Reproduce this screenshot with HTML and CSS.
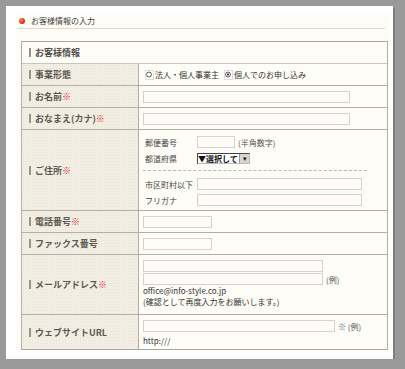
FILE: index.html
```html
<!DOCTYPE html>
<html lang="ja">

<head>
    <meta charset="UTF-8">
    <meta name="viewport" content="width=device-width, initial-scale=1.0">
    <title>お客様情報の入力</title>
    <link rel="stylesheet" href="styles.css">
</head>

<body>

    <!-- Outer panel -->
    <div class="panel">
        <div class="sheet">

            <!-- Page title -->
            <h1 class="title"><span class="dot"></span>お客様情報の入力</h1>

            <!-- Customer form -->
            <div class="form">
                <div class="caption"><span class="bar"></span>お客様情報</div>

                <div class="label"><span class="bar"></span>事業形態</div>
                <div class="value">
                    <span class="radio">
                        <svg width="9" height="10" viewBox="0 0 9 10"><circle cx="4.5" cy="4.5" r="2.8" fill="none" stroke="#333" stroke-width="0.9"/></svg>
                    </span>
                    <span class="opt">法人・個人事業主</span>
                    <span class="radio">
                        <svg width="9" height="10" viewBox="0 0 9 10"><circle cx="4.5" cy="4.5" r="2.8" fill="none" stroke="#333" stroke-width="0.9"/><circle cx="4.5" cy="4.5" r="1.2" fill="#222"/></svg>
                    </span>
                    <span class="opt">個人でのお申し込み</span>
                </div>

                <div class="label"><span class="bar"></span>お名前<span class="req">※</span></div>
                <div class="value"><input type="text" class="field w-name"></div>

                <div class="label"><span class="bar"></span>おなまえ(カナ)<span class="req">※</span></div>
                <div class="value"><input type="text" class="field w-name"></div>

                <div class="label tall"><span class="bar"></span>ご住所<span class="req">※</span></div>
                <div class="value address">
                    <div class="sub">
                        <span class="sub-label">郵便番号</span>
                        <input type="text" class="field w-zip">
                        <span class="note">(半角数字)</span>
                    </div>
                    <div class="sub">
                        <span class="sub-label">都道府県</span>
                        <span class="select">▼選択して<span class="select-btn">▾</span></span>
                    </div>
                    <div class="dashed"></div>
                    <div class="sub">
                        <span class="sub-label">市区町村以下</span>
                        <input type="text" class="field w-addr">
                    </div>
                    <div class="sub">
                        <span class="sub-label">フリガナ</span>
                        <input type="text" class="field w-addr">
                    </div>
                </div>

                <div class="label"><span class="bar"></span>電話番号<span class="req">※</span></div>
                <div class="value"><input type="text" class="field w-tel"></div>

                <div class="label"><span class="bar"></span>ファックス番号</div>
                <div class="value"><input type="text" class="field w-tel"></div>

                <div class="label"><span class="bar"></span>メールアドレス<span class="req">※</span></div>
                <div class="value stack mail">
                    <input type="text" class="field w-mail">
                    <div class="line"><input type="text" class="field w-mail"><span class="note">(例)</span></div>
                    <div class="text">office@info-style.co.jp</div>
                    <div class="text">(確認として再度入力をお願いします。)</div>
                </div>

                <div class="label last"><span class="bar"></span>ウェブサイトURL</div>
                <div class="value stack url last">
                    <div class="line"><input type="text" class="field w-url"><span class="note">※ (例)</span></div>
                    <div class="text">http:///</div>
                </div>
            </div>

        </div>
    </div>

</body>

</html>
```

FILE: styles.css
```css
/* Page background */
body {
    margin: 0;
    padding: 6px 0 0 6px;
    background-color: #999999;
    font-family: "Noto Sans CJK JP", "Noto Sans", sans-serif;
    color: #444444;
}

/* White outer panel */
.panel {
    width: 387px;
    height: 353px;
    background-color: #ffffff;
    box-shadow: 2px 2px 0 #7f7f7f;
    padding: 7px 4px 9px 10px;
    box-sizing: border-box;
}

/* Cream sheet */
.sheet {
    background-color: #fdfcf7;
    height: 337px;
}

/* Title */
.title {
    display: flex;
    align-items: center;
    height: 15px;
    margin: 0 4px 0 1px;
    padding-left: 2px;
    border-bottom: 1px solid #ead6cc;
    font-size: 8px;
    font-weight: normal;
    color: #444444;
}

.dot {
    width: 6px;
    height: 6px;
    border-radius: 50%;
    background: radial-gradient(circle at 35% 35%, #ff8a6a, #d8321a 60%, #b02010);
    margin-right: 6px;
}

/* Form grid */
.form {
    display: grid;
    grid-template-columns: 117px 1fr;
    grid-template-rows: 22px 22px 22px 22px 81px 22px 22px 60px 35px;
    width: 367px;
    margin: 12px 0 0 5px;
    border: 1px solid #b4afa3;
    border-top-color: #a9a69e;
    border-bottom: none;
    box-sizing: border-box;
}

.caption {
    grid-column: 1 / -1;
    display: flex;
    align-items: center;
    padding-left: 7px;
    border-bottom: 1px solid #c9c6bc;
    font-size: 9px;
    font-weight: bold;
    color: #55514b;
}

.bar {
    display: inline-block;
    width: 2px;
    height: 9px;
    background-color: #97938c;
    margin-right: 4px;
}

/* Label cells */
.label {
    display: flex;
    align-items: center;
    padding-left: 7px;
    background-color: #f2eee3;
    background-image: radial-gradient(#e9e4d6 0.6px, transparent 0.7px);
    background-size: 3px 3px;
    border-right: 1px solid #b4afa3;
    border-bottom: 1px solid #b4afa3;
    font-size: 9px;
    font-weight: bold;
    color: #5c5852;
}

.req {
    color: #e0282a;
}

/* Value cells */
.value {
    display: flex;
    align-items: center;
    padding-left: 4px;
    border-bottom: 1px solid #b4afa3;
    font-size: 8px;
    color: #333333;
}

.label.last,
.value.last {
    border-bottom-color: #a9a69e;
}

/* Radio buttons */
.radio {
    display: inline-flex;
    width: 9px;
    height: 10px;
    margin-left: 2px;
    background-color: #ffffff;
    border: 1px solid #dcdcdc;
    box-sizing: border-box;
}

.radio svg {
    margin: -1px 0 0 -1px;
}

.opt {
    margin: 0 3px 0 1px;
}

/* Text fields */
.field {
    display: block;
    height: 12px;
    padding: 0;
    margin: 0;
    border: 1px solid #d3d2cc;
    background-color: #fdfcf8;
    box-sizing: border-box;
}

.w-name { width: 207px; }
.w-zip { width: 38px; }
.w-addr { width: 165px; }
.w-tel { width: 69px; }
.w-mail { width: 180px; }
.w-url { width: 192px; }

.note {
    margin-left: 3px;
    color: #555555;
}

/* Address block */
.address {
    flex-direction: column;
    align-items: flex-start;
    justify-content: flex-start;
    padding-top: 6px;
    box-sizing: border-box;
}

.sub {
    display: flex;
    align-items: center;
    height: 12px;
    margin-bottom: 4px;
}

.sub-label {
    width: 52px;
    padding-left: 2px;
    color: #444444;
}

.select {
    display: flex;
    align-items: center;
    width: 53px;
    height: 11px;
    border: 1px solid #444444;
    border-right-color: #bbbbbb;
    border-bottom-color: #bbbbbb;
    background-color: #ffffff;
    box-sizing: border-box;
    font-size: 8px;
    font-weight: bold;
    color: #111111;
    position: relative;
}

.select-btn {
    position: absolute;
    right: 0;
    top: 0;
    width: 9px;
    height: 9px;
    background-color: #d8d5cf;
    border-left: 1px solid #999999;
    font-size: 7px;
    line-height: 9px;
    text-align: center;
    font-weight: normal;
}

.dashed {
    width: 224px;
    border-top: 1px dashed #bdb9b0;
    margin: 2px 0 7px 0;
}

/* Stacked cells */
.stack {
    flex-direction: column;
    align-items: flex-start;
    justify-content: flex-start;
    padding-top: 5px;
    box-sizing: border-box;
}

.stack .line {
    display: flex;
    align-items: center;
    margin-top: 1px;
}

.url .line {
    margin-top: 0;
}

.stack .text {
    height: 11px;
    line-height: 11px;
}

.mail .text:first-of-type {
    margin-top: 3px;
}

.url .text {
    margin-top: 3px;
}
```
